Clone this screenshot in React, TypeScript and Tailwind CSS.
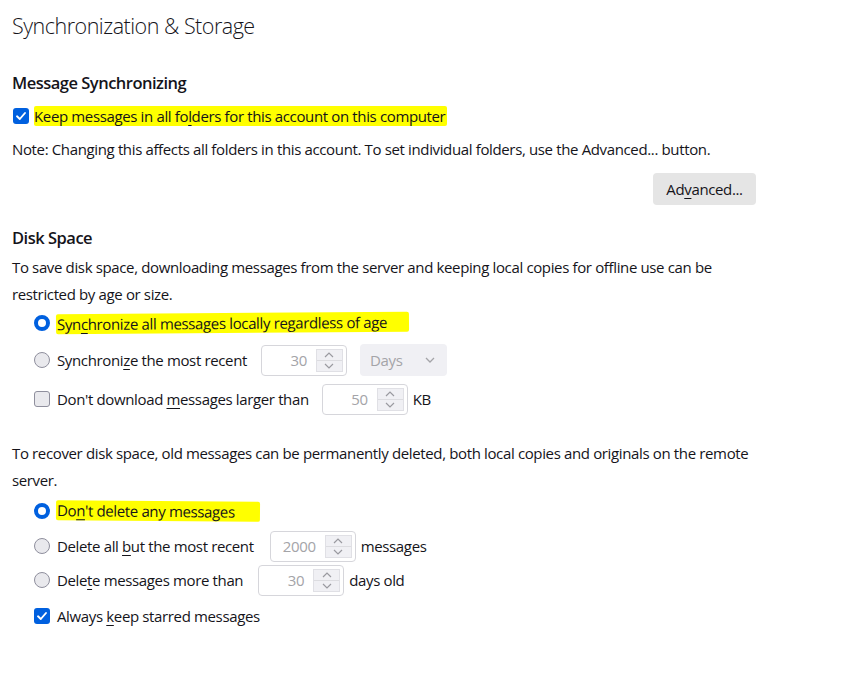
import React from "react";

const U = ({ children }: { children: React.ReactNode }) => (
  <span className="underline underline-offset-[3px] decoration-1">{children}</span>
);

const CheckOn = () => (
  <span className="w-4 h-4 rounded-[3px] bg-[#0060df] flex items-center justify-center shrink-0">
    <svg width="12" height="12" viewBox="0 0 12 12">
      <path d="M2 6.3 L4.8 9 L10 3" fill="none" stroke="white" strokeWidth="1.9" strokeLinecap="round" strokeLinejoin="round" />
    </svg>
  </span>
);

const CheckOff = () => (
  <span className="w-4 h-4 rounded-[3px] bg-[#e9e9ed] border border-[#8f8f9d] shrink-0" />
);

const RadioOn = () => (
  <span className="w-4 h-4 rounded-full border-[4px] border-[#0060df] bg-white shrink-0" />
);

const RadioOff = () => (
  <span className="w-4 h-4 rounded-full bg-[#e9e9ed] border border-[#8f8f9d] shrink-0" />
);

const Spin = ({ value }: { value: string }) => (
  <div className="flex w-[86px] h-[31px] border border-[#d6d6db] rounded-[4px] bg-white shrink-0">
    <div className="flex-1 flex items-center justify-end pr-[9px] text-[#a4a4a8]">{value}</div>
    <div className="w-[27px] my-[3px] mr-[3px] flex flex-col bg-[#f0f0f4] border border-[#e0e0e5]">
      <div className="flex-1 flex items-center justify-center border-b border-[#dcdce0]">
        <svg width="10" height="6" viewBox="0 0 10 6">
          <path d="M1 5 L5 1 L9 5" fill="none" stroke="#9a9aa0" strokeWidth="1.2" />
        </svg>
      </div>
      <div className="flex-1 flex items-center justify-center">
        <svg width="10" height="6" viewBox="0 0 10 6">
          <path d="M1 1 L5 5 L9 1" fill="none" stroke="#9a9aa0" strokeWidth="1.2" />
        </svg>
      </div>
    </div>
  </div>
);

export default function App() {
  return (
    <div
      className="w-[851px] h-[693px] bg-white text-[#15141a] px-3 text-[15px] leading-[24px] tracking-[-0.36px]"
      style={{ fontFamily: '"Open Sans", "Noto Sans", sans-serif' }}
    >
      <div className="flex flex-col">
        <h1 className="mt-[11px] h-[30px] leading-[30px] text-[21.5px] font-light tracking-[-0.5px]">
          Synchronization &amp; Storage
        </h1>

        <h2 className="mt-[30px] h-[24px] text-[16.5px] font-semibold tracking-[-0.5px]">Message Synchronizing</h2>

        <div className="mt-[9px] h-[24px] flex items-center gap-[5px] pl-[1px]">
          <CheckOn />
          <span className="bg-[#ffff00] pl-[0px] pr-[2px] rounded-[2px] leading-[20px]">
            Keep messages in all fo<U>l</U>ders for this account on this computer
          </span>
        </div>

        <p className="mt-[9px] h-[24px]">
          Note: Changing this affects all folders in this account. To set individual folders, use the Advanced... button.
        </p>

        <div className="mt-[12px] flex pl-[641px]">
          <button className="w-[103px] h-[32px] rounded-[4px] bg-[#e5e5e5] text-[15px]">
            Ad<U>v</U>anced...
          </button>
        </div>

        <h2 className="mt-[21px] h-[24px] text-[16.5px] font-semibold tracking-[-0.5px]">Disk Space</h2>

        <p className="mt-[4px] leading-[27px]">
          To save disk space, downloading messages from the server and keeping local copies for offline use can be
          <br />
          restricted by age or size.
        </p>

        <div className="pl-[22px] flex flex-col">
          <div className="mt-[3px] h-[24px] flex items-center gap-[6px]">
            <RadioOn />
            <span className="bg-[#ffff00] pl-[1px] pr-[22px] rounded-[2px] leading-[20px] -rotate-[0.4deg]">
              Syn<U>c</U>hronize all messages locally regardless of age
            </span>
          </div>

          <div className="mt-[9px] h-[32px] flex items-center">
            <RadioOff />
            <span className="ml-[7px]">Synchroni<U>z</U>e the most recent</span>
            <div className="ml-[14px]">
              <Spin value="30" />
            </div>
            <div className="ml-[13px] w-[87px] h-[32px] rounded-[4px] bg-[#f0f0f4] flex items-center justify-between pl-[10px] pr-[12px] text-[#a4a4a8]">
              <span>Days</span>
              <svg width="10" height="6" viewBox="0 0 10 6">
                <path d="M1 1 L5 5 L9 1" fill="none" stroke="#a4a4a8" strokeWidth="1.3" />
              </svg>
            </div>
          </div>

          <div className="mt-[7px] h-[32px] flex items-center">
            <CheckOff />
            <span className="ml-[7px]">Don't download <U>m</U>essages larger than</span>
            <div className="ml-[13px]">
              <Spin value="50" />
            </div>
            <span className="ml-[5px]">KB</span>
          </div>
        </div>

        <p className="mt-[25px] leading-[27px]">
          To recover disk space, old messages can be permanently deleted, both local copies and originals on the remote
          <br />
          server.
        </p>

        <div className="pl-[22px] flex flex-col">
          <div className="mt-[5px] h-[24px] flex items-center gap-[6px]">
            <RadioOn />
            <span className="bg-[#ffff00] pl-[1px] pr-[25px] rounded-[2px] leading-[20px] rotate-[0.5deg]">
              Do<U>n</U>'t delete any messages
            </span>
          </div>

          <div className="mt-[7px] h-[32px] flex items-center">
            <RadioOff />
            <span className="ml-[7px]">Delete all <U>b</U>ut the most recent</span>
            <div className="ml-[16px]">
              <Spin value="2000" />
            </div>
            <span className="ml-[5px]">messages</span>
          </div>

          <div className="mt-[2px] h-[32px] flex items-center">
            <RadioOff />
            <span className="ml-[7px]">Dele<U>t</U>e messages more than</span>
            <div className="ml-[15px]">
              <Spin value="30" />
            </div>
            <span className="ml-[5px]">days old</span>
          </div>

          <div className="mt-[8px] h-[24px] flex items-center gap-[7px]">
            <CheckOn />
            <span>Always <U>k</U>eep starred messages</span>
          </div>
        </div>
      </div>
    </div>
  );
}
